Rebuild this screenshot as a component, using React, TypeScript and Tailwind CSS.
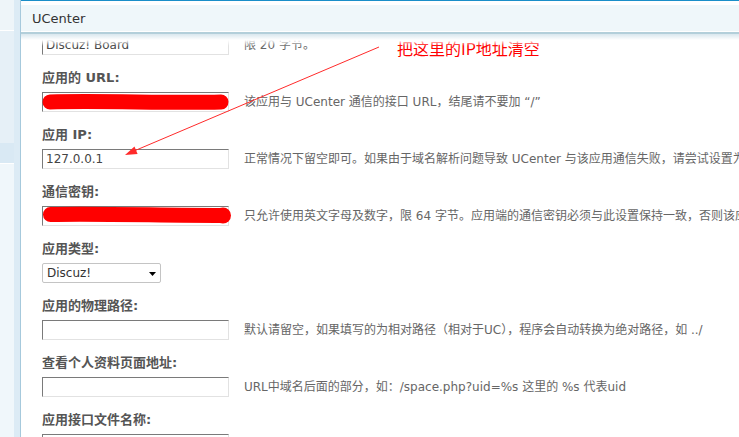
const font = "font-['DejaVu_Sans','Noto_Sans_CJK_SC',sans-serif]";

function Scribble({ kind }: { kind: "url" | "key" }) {
  return (
    <svg className="pointer-events-none absolute left-[-1px] top-[-1px] overflow-visible" width="189" height="22">
      {kind === "url" ? (
        <path d="M8 10 C 60 8.5, 130 11.5, 179 10" stroke="#ff0000" strokeWidth="15" strokeLinecap="round" fill="none" />
      ) : (
        <>
          <path d="M8.5 8.5 C 60 7.5, 120 9.5, 180 9.5" stroke="#ff0000" strokeWidth="15" strokeLinecap="round" fill="none" />
          <circle cx="181" cy="9.5" r="8" fill="#ff0000" />
        </>
      )}
    </svg>
  );
}

function TextInput({ value, scribble }: { value?: string; scribble?: "url" | "key" }) {
  return (
    <div className="relative h-[20px] w-[187px] shrink-0 border border-t-[#7a7a7a] border-l-[#7a7a7a] border-r-[#e2e2e2] border-b-[#e2e2e2] bg-white pl-[3px] text-[12px] leading-[18px] text-[#444]">
      {value}
      {scribble && <Scribble kind={scribble} />}
    </div>
  );
}

function Select() {
  return (
    <div className="flex h-[20px] w-[119px] shrink-0 items-center justify-between rounded-[2px] border border-[#c4c4c4] bg-white pl-[4px] pr-[4px] text-[12px] text-[#333]">
      <span>Discuz!</span>
      <svg width="7" height="4" className="mt-[1px]">
        <path d="M0 0h7L3.5 4z" fill="#000" />
      </svg>
    </div>
  );
}

const rows: { label: string; control: React.ReactNode; desc?: string }[] = [
  { label: "应用名称:", control: <TextInput value="Discuz! Board" />, desc: "限 20 字节。" },
  {
    label: "应用的 URL:",
    control: <TextInput scribble="url" />,
    desc: "该应用与 UCenter 通信的接口 URL，结尾请不要加 “/”",
  },
  {
    label: "应用 IP:",
    control: <TextInput value="127.0.0.1" />,
    desc: "正常情况下留空即可。如果由于域名解析问题导致 UCenter 与该应用通信失败，请尝试设置为该应用所在服务器的 IP 地址。",
  },
  {
    label: "通信密钥:",
    control: <TextInput scribble="key" />,
    desc: "只允许使用英文字母及数字，限 64 字节。应用端的通信密钥必须与此设置保持一致，否则该应用将无法与 UCenter 正常通信。",
  },
  { label: "应用类型:", control: <Select /> },
  {
    label: "应用的物理路径:",
    control: <TextInput />,
    desc: "默认请留空，如果填写的为相对路径（相对于UC），程序会自动转换为绝对路径，如 ../",
  },
  {
    label: "查看个人资料页面地址:",
    control: <TextInput />,
    desc: "URL中域名后面的部分，如：/space.php?uid=%s 这里的 %s 代表uid",
  },
  { label: "应用接口文件名称:", control: <TextInput /> },
];

export default function App() {
  return (
    <div className={`relative flex h-[437px] w-[739px] overflow-hidden bg-white ${font}`}>
      {/* left nav edge */}
      <aside className="flex w-[21px] shrink-0 border-r border-[#a6c9dc]">
        <div className="flex w-[14px] flex-col">
          <div className="h-[30px] bg-[#eef5f9]" />
          <div className="h-px bg-white" />
          <div className="h-[112px] bg-[#e6f0f7]" />
          <div className="h-[20px] bg-[#d9e9f4]" />
          <div className="h-px bg-white" />
          <div className="flex-1 bg-[#f0f7fb]" />
        </div>
        <div className="w-[6px] bg-[#dcebf5]" />
      </aside>

      <main className="flex min-w-0 flex-1 flex-col">
        <header className="shrink-0 border-t border-[#1a8ec8] pt-[4px]">
          <div className="flex h-[26px] items-center bg-[#eff7fa] pl-[11px] pt-[2px] text-[13px] leading-4 text-[#333]">UCenter</div>
          <div className="h-px bg-white" />
          <div className="h-[2px] bg-[#b3cfda]" />
        </header>

        <div className="relative flex-1 overflow-hidden">
          <div className="pointer-events-none absolute inset-x-0 top-0 z-10 h-[12px] bg-[linear-gradient(to_bottom,#d9e7ee_0px,#ffffff_6px,rgba(255,255,255,0)_12px)]" />
          <div className="mt-[-21px] flex flex-col gap-[15px] pl-[21px]">
            {rows.map((r) => (
              <div key={r.label} className="flex flex-col">
                <div className="mb-[6px] h-4 text-[13px] font-bold leading-4 text-[#555]">{r.label}</div>
                <div className="flex items-center whitespace-nowrap">
                  {r.control}
                  {r.desc && <span className="ml-[15px] text-[12px] text-[#666]">{r.desc}</span>}
                </div>
              </div>
            ))}
          </div>
        </div>
      </main>

      {/* annotation */}
      <svg className="pointer-events-none absolute left-0 top-0" width="739" height="437">
        <line x1="379" y1="47" x2="134" y2="151" stroke="#ff2a2a" strokeWidth="1" />
        <polygon points="125,155 137.6,154 134.5,146.6" fill="#ff2a2a" />
      </svg>
      <div className="absolute left-[397px] top-[40px] whitespace-nowrap font-['Noto_Sans_CJK_SC',sans-serif] text-[16px] leading-[16px] text-[#ff0000]">
        把这里的IP地址清空
      </div>
    </div>
  );
}
